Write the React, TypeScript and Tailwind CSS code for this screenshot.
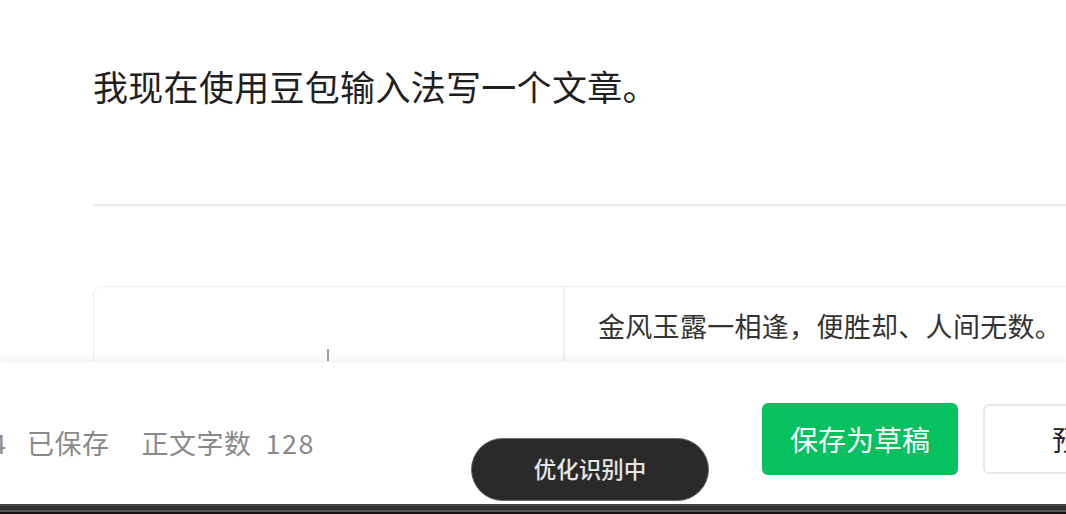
import React from 'react';

const font = { fontFamily: '"Noto Sans CJK SC", "Noto Sans", sans-serif' };

export default function App() {
  return (
    <div className="relative w-[1066px] h-[514px] overflow-hidden bg-white" style={font}>
      {/* Editor */}
      <div className="pl-[93px] pt-[60px]">
        <h1 className="text-[35px] leading-[51px] tracking-[0.3px] text-[#1f1f1f] font-normal whitespace-nowrap">
          我现在使用豆包输入法写一个文章。
        </h1>
        <div className="mt-[93px] h-[2px] bg-[#ebebeb]" />
        <div className="mt-[80px] flex h-[240px] border-l border-t border-[#eeeeee] rounded-tl-lg">
          <div className="w-[471px] border-r-2 border-[#f0f0f0] flex justify-center pt-[62px]">
            <div className="ml-[-1px] w-[2px] h-[14px] bg-[#a0a0a0]" />
          </div>
          <div className="flex-1 pl-[33px] pt-[21px]">
            <p className="text-[27px] leading-[36px] tracking-[0.3px] text-[#333] whitespace-nowrap">
              金风玉露一相逢，便胜却、人间无数。
            </p>
          </div>
        </div>
      </div>

      {/* Footer bar */}
      <div className="absolute left-0 right-0 top-[361px] h-[143px] bg-white shadow-[0_-3px_8px_rgba(0,0,0,0.05)] border-t border-[#f2f2f2]">
        <div className="mt-[41px] h-[72px] flex items-center">
          <div className="flex items-center ml-[-9px] mt-[8px] text-[27px] text-[#8a8a8a] whitespace-nowrap">
            <span className="tracking-[1px]">4</span>
            <span className="ml-[20px] tracking-[0.5px]">已保存</span>
            <span className="ml-[32px] tracking-[0.5px]">正文字数</span>
            <span className="ml-[14px] tracking-[1.5px]">128</span>
          </div>
          <div className="ml-auto flex items-center gap-[25px] mr-[-120px]">
            <button className="w-[196px] h-[72px] rounded-md bg-[#07c160] text-white text-[28px]">
              保存为草稿
            </button>
            <button className="w-[203px] h-[70px] rounded-md border-2 border-[#e8e8e8] bg-white text-[#222] text-[28px] text-left pl-[67px]">
              预览
            </button>
          </div>
        </div>
      </div>

      {/* Toast */}
      <div className="absolute left-[471px] top-[438px] w-[238px] h-[63px] rounded-full bg-[#2a2a2a] border border-[#6a6a6a] flex items-center justify-center">
        <span className="text-[22.5px] font-medium text-[#e6e6e6] -mt-[1px]">优化识别中</span>
      </div>

      {/* Bottom dock strip */}
      <div className="absolute left-0 right-0 bottom-0 h-[10px] flex flex-col">
        <div className="h-[2px] bg-[#464646]" />
        <div className="h-[4px] bg-[#333333]" />
        <div className="h-[2px] bg-[#555555]" />
        <div className="h-[2px] bg-[#121212]" />
      </div>
    </div>
  );
}
